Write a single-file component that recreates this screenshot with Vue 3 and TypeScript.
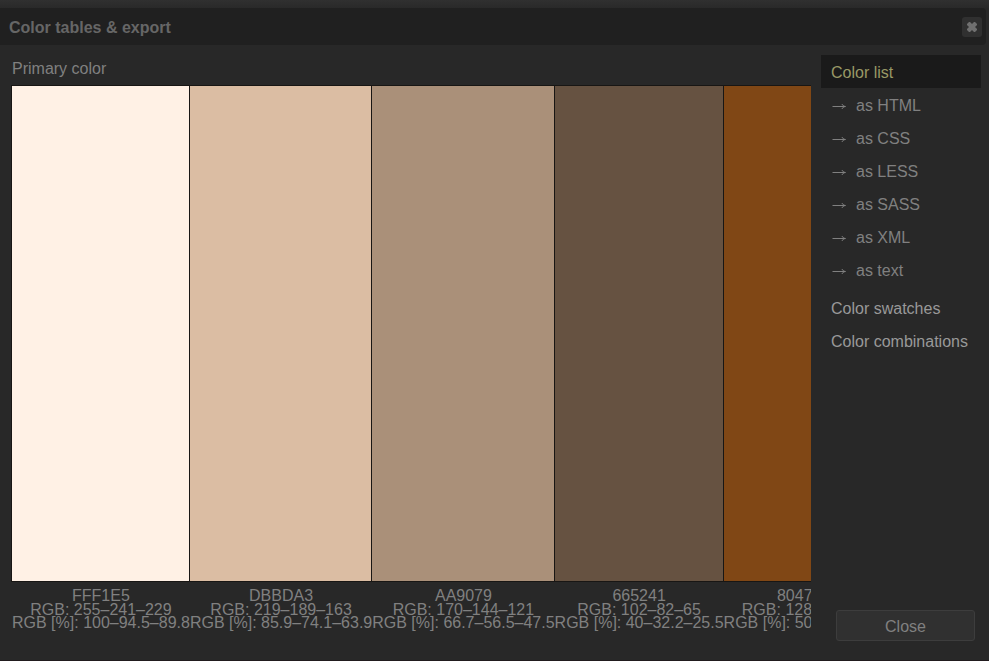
<script setup lang="ts">
import { ref } from 'vue'

interface Swatch {
  hex: string
  rgb: string
  percent: string
}

const swatches: Swatch[] = [
  { hex: 'FFF1E5', rgb: '255–241–229', percent: '100–94.5–89.8' },
  { hex: 'DBBDA3', rgb: '219–189–163', percent: '85.9–74.1–63.9' },
  { hex: 'AA9079', rgb: '170–144–121', percent: '66.7–56.5–47.5' },
  { hex: '665241', rgb: '102–82–65', percent: '40–32.2–25.5' },
  { hex: '804715', rgb: '128–71–21', percent: '50–27.8–8.2' },
]

const formats = ['HTML', 'CSS', 'LESS', 'SASS', 'XML', 'text']
const open = ref(true)
</script>

<template>
  <div class="page">
    <section v-if="open" class="dialog" role="dialog" aria-labelledby="dialog-title">
      <header class="titlebar">
        <h1 id="dialog-title">Color tables &amp; export</h1>
        <button class="dismiss" type="button" aria-label="Close dialog" @click="open = false">
          <svg viewBox="0 0 10 10" width="10" height="10" aria-hidden="true">
            <path d="M2 0h1l2 2 2-2h1l2 2v1L8 5l2 2v1l-2 2H7L5 8l-2 2H2L0 8V7l2-2-2-2V2z" />
          </svg>
        </button>
      </header>
      <div class="content">
        <main class="palette">
          <h2>Primary color</h2>
          <div class="swatches">
            <div v-for="s in swatches" :key="s.hex" class="swatch">
              <div class="fill" :style="{ backgroundColor: '#' + s.hex }"></div>
              <div class="hex">{{ s.hex }}</div>
              <div class="values">RGB: {{ s.rgb }}</div>
              <div class="values">RGB [%]: {{ s.percent }}</div>
            </div>
          </div>
        </main>
        <aside class="side">
          <nav>
            <a class="item active" href="#list">Color list</a>
            <div class="formats">
              <a v-for="f in formats" :key="f" class="item sub" :href="'#' + f.toLowerCase()">
                <svg class="arrow" viewBox="0 0 15 8" width="15" height="8" aria-hidden="true">
                  <path d="M1.500 4.500H14.500M11 2C11.500 3.400 12.600 4.200 14.300 4.500C12.600 4.800 11.500 5.600 11 7" />
                </svg>
                <span>as {{ f }}</span>
              </a>
            </div>
            <a class="item" href="#swatches">Color swatches</a>
            <a class="item" href="#combinations">Color combinations</a>
          </nav>
          <button class="close" type="button" @click="open = false">Close</button>
        </aside>
      </div>
    </section>
  </div>
</template>

<style>
body {
  margin: 0;
  background: #282828;
}
</style>

<style scoped>
* {
  box-sizing: border-box;
}
.page {
  display: flex;
  min-height: 100vh;
  padding: 8px 3px 0 0;
  border-bottom: 1px solid #211b1e;
  background: linear-gradient(#303030, #292929 8px, #282828 8px);
  color: #808080;
  font: 16px/20px "Liberation Sans", Arial, sans-serif;
}
.dialog {
  display: flex;
  flex: 1;
  flex-direction: column;
  min-width: 0;
}
.titlebar {
  display: flex;
  align-items: center;
  justify-content: space-between;
  height: 37px;
  padding: 0 4px 0 9px;
  border-radius: 0 4px 4px 0;
  background: #202020;
}
h1 {
  margin: 0;
  padding-top: 2px;
  color: #666;
  font-size: 16px;
}
.dismiss {
  display: grid;
  place-items: center;
  width: 20px;
  height: 20px;
  padding: 0;
  border: 0;
  border-radius: 3px;
  background: #303030;
  fill: #707070;
}
.content {
  display: flex;
  flex: 1;
  gap: 10px;
  padding: 10px 5px 19px 11px;
}
.palette {
  display: flex;
  flex: 1;
  flex-direction: column;
  min-width: 0;
}
h2 {
  margin: 0;
  padding: 4px 1px 6px;
  font-size: 16px;
  font-weight: 400;
}
.swatches {
  display: flex;
  flex: 1;
  padding: 1px 0 0 1px;
  overflow: hidden;
}
.swatch {
  display: flex;
  flex: none;
  flex-direction: column;
  padding-bottom: 12px;
  text-align: center;
  white-space: nowrap;
}
.fill {
  flex: 1;
  margin-bottom: 7px;
  box-shadow: 0 0 0 1px #181614;
}
.hex {
  line-height: 15px;
}
.values {
  line-height: 13px;
}
.side {
  display: flex;
  flex-direction: column;
  justify-content: space-between;
  width: 160px;
}
.item {
  display: flex;
  align-items: center;
  height: 33px;
  padding: 2px 10px 0;
  color: #999;
  text-decoration: none;
  white-space: nowrap;
}
.active {
  background: #1a1a1a;
  color: #999966;
}
.formats {
  padding-bottom: 5px;
}
.sub {
  gap: 10px;
  color: #808080;
}
.arrow {
  fill: none;
  stroke: currentColor;
}
.close {
  height: 31px;
  margin: 0 6px 0 15px;
  padding: 2px 0 0;
  border: 1px solid #3d3d3d;
  border-radius: 3px;
  background: #303030;
  color: #808080;
  font: inherit;
}
</style>
